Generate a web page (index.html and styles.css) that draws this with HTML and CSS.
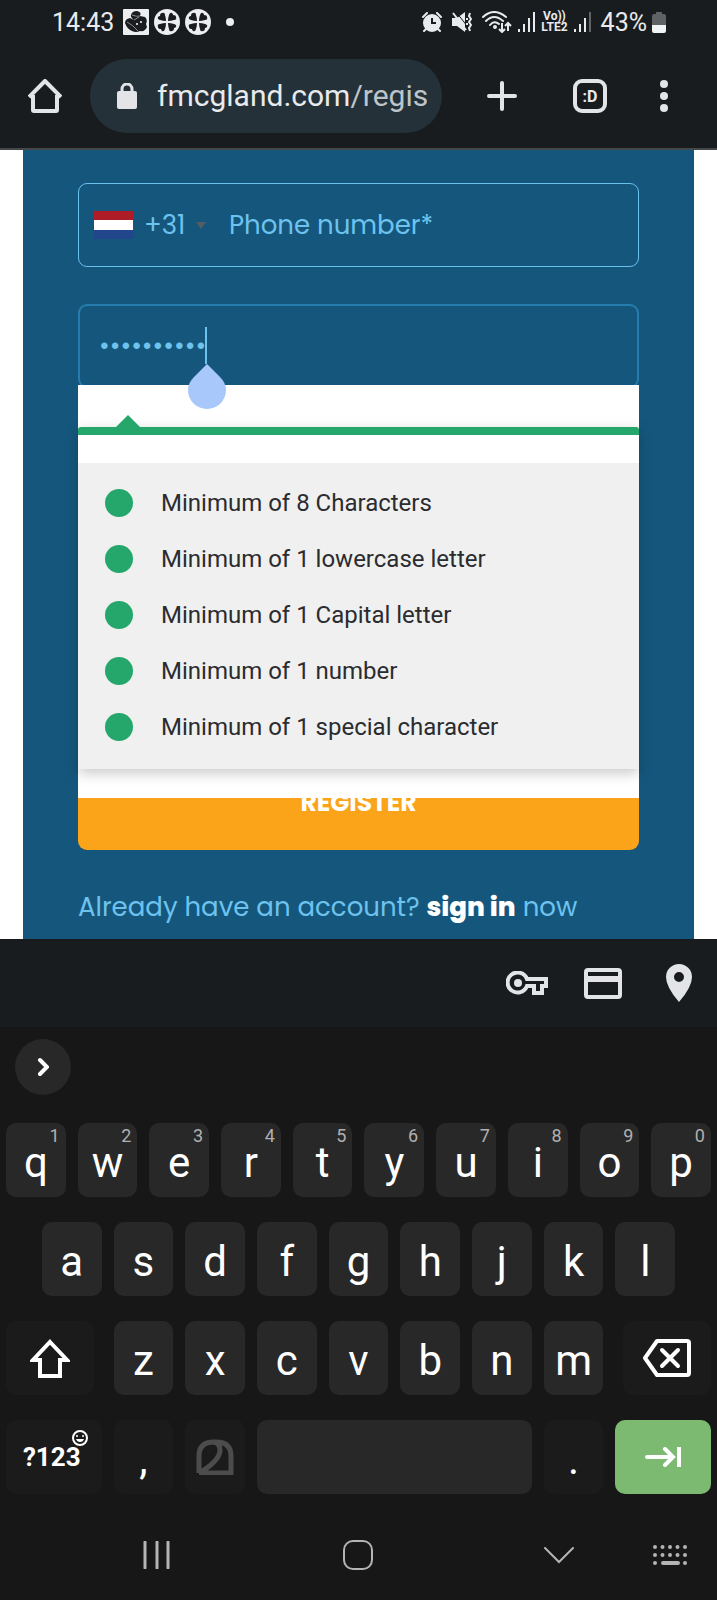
FILE: index.html
```html
<!DOCTYPE html>
<html lang="en">
<head>
<meta charset="utf-8">
<meta name="viewport" content="width=device-width, initial-scale=1">
<title>Register</title>
<link rel="stylesheet" href="styles.css">
</head>
<body>
<header class="chrome">
  <div class="status">
    <span class="status-time">14:43</span>
    <svg width="26" height="26" viewBox="0 0 26 26"><rect width="26" height="26" rx="1" fill="#eceef0"/><path d="M8 6Q9 2 14 2Q19 3 17 7L22 8Q25 11 23 15L24 18Q22 23 17 22Q13 24 9 22Q4 20 2 14Q2 10 7 9L11 11Q7 8 8 6z" fill="#1a1c1f"/><path d="M9 6q5 2 8 1M11 11l5-3M4 13q6 3 11 9" stroke="#8a8d90" stroke-width="1" fill="none"/><circle cx="18" cy="13" r="1" fill="#fff"/><circle cx="14" cy="15" r="1" fill="#fff"/></svg>
    <svg width="26" height="26" viewBox="0 0 26 26"><circle cx="13" cy="13" r="13" fill="#eceef0"/><g fill="#1a1c1f"><path id="petal" d="M12 12Q9 12 6 11Q3 10 4 8Q5 7 6 7Q6 4 8 4Q11 3 11 6Q12 9 12 12z"/><use href="#petal" transform="rotate(90 13 13)"/><use href="#petal" transform="rotate(180 13 13)"/><use href="#petal" transform="rotate(270 13 13)"/></g></svg>
    <svg width="26" height="26" viewBox="0 0 26 26"><circle cx="13" cy="13" r="13" fill="#eceef0"/><g fill="#1a1c1f"><use href="#petal"/><use href="#petal" transform="rotate(90 13 13)"/><use href="#petal" transform="rotate(180 13 13)"/><use href="#petal" transform="rotate(270 13 13)"/></g></svg>
    <span class="status-dot"></span>
    <span class="status-right">
      <svg width="20" height="20" viewBox="0 0 20 20"><circle cx="10" cy="11" r="9" fill="#e8eaed"/><path d="M1 5l4-4M19 5l-4-4M4 17l-2 2M16 17l2 2" stroke="#e8eaed" stroke-width="2" stroke-linecap="round"/><path d="M10 6v5h4" stroke="#1a1c1f" stroke-width="2" fill="none"/></svg>
      <svg width="20" height="20" viewBox="0 0 20 20"><path d="M0 6h5l8-6v20l-8-6H0z" fill="#e8eaed"/><path d="M4 0l12 15" stroke="#191c1e" stroke-width="1"/><path d="M1 1l13 17" stroke="#e8eaed" stroke-width="2"/><path d="M15 6v2M15 11v2M18 1l-1 3 2 3-2 3 2 3-2 3 1 3" stroke="#e8eaed" stroke-width="2" fill="none"/></svg>
      <svg width="30" height="22" viewBox="0 0 30 22"><path d="M1 6Q12-4 24 6M4 10Q12 2 21 10M8 14Q12 9 17 13" stroke="#e8eaed" stroke-width="2" fill="none" stroke-linecap="round"/><circle cx="13" cy="16" r="2" fill="#e8eaed"/><path d="M20 12v8M17 18l3 3 3-3M26 20v-7M23 15l3-3 3 3" stroke="#e8eaed" stroke-width="2" fill="none"/></svg>
      <svg width="19" height="20" viewBox="0 0 19 20"><path d="M2 20v-3M7 20v-8M12 20V6M17 20V0" stroke="#e8eaed" stroke-width="2"/></svg>
      <span class="volte"><span>Vo))</span><span>LTE2</span></span>
      <svg width="19" height="20" viewBox="0 0 19 20"><path d="M2 20v-3M7 20v-8M12 20V6" stroke="#e8eaed" stroke-width="2"/><path d="M17 20V0" stroke="#616467" stroke-width="2"/></svg>
      <span class="battery-text">43%</span>
      <svg width="14" height="21" viewBox="0 0 14 21"><path d="M4 0h6v2h2q2 0 2 2v9H0V4q0-2 2-2h2z" fill="#5f6164"/><path d="M0 13h14v6q0 2-2 2H2q-2 0-2-2z" fill="#f1f3f4"/></svg>
    </span>
  </div>
  <nav class="toolbar">
    <button class="tool home" aria-label="Home"><svg width="34" height="34" viewBox="0 0 34 34"><path d="M5 16v15q0 1 1 1h22q1 0 1-1V16M1 18L17 2l16 16" fill="none" stroke="#e3e4e8" stroke-width="4" stroke-linejoin="round"/></svg></button>
    <div class="pill">
      <svg width="20" height="26" viewBox="0 0 20 26"><path d="M5 10V6a5 5 0 0 1 10 0v4" fill="none" stroke="#e3e4e8" stroke-width="3"/><rect y="8" width="20" height="18" rx="2" fill="#e3e4e8"/></svg>
      <span class="url">fmcgland.com<span class="url-path">/regis</span></span>
    </div>
    <button class="tool wide" aria-label="New tab"><svg width="30" height="30" viewBox="0 0 30 30"><path d="M15 2v26M2 15h26" stroke="#e3e4e8" stroke-width="4" stroke-linecap="round"/></svg></button>
    <button class="tool wide" aria-label="Tabs"><span class="tabs">:D</span></button>
    <button class="tool menu" aria-label="Menu"><svg width="8" height="32" viewBox="0 0 8 32"><g fill="#e3e4e8"><circle cx="4" cy="4" r="4"/><circle cx="4" cy="16" r="4"/><circle cx="4" cy="28" r="4"/></g></svg></button>
  </nav>
</header>

<main class="page">
  <form class="form">
    <div class="field phone">
      <svg class="flag" width="39" height="28" viewBox="0 0 39 28"><rect width="39" height="28" fill="#fff"/><rect width="39" height="9" fill="#ae1c28"/><rect y="19" width="39" height="9" fill="#21468b"/></svg>
      <span class="code">+31</span>
      <span class="arrow"></span>
      <input class="phone-input" type="tel" placeholder="Phone number*" aria-label="Phone number">
    </div>
    <div class="password">
      <input class="field password-input" type="password" value="Abcdef123!" aria-label="Password">
      <span class="caret"></span>
      <svg class="handle" width="38" height="45" viewBox="0 0 38 45"><path d="M19 0L32 13Q38 19 38 26A19 19 0 0 1 0 26Q0 19 6 13z" fill="#a8c7fa"/></svg>
      <div class="popup">
        <div class="card">
          <ul class="rules">
            <li>Minimum of 8 Characters</li>
            <li>Minimum of 1 lowercase letter</li>
            <li>Minimum of 1 Capital letter</li>
            <li>Minimum of 1 number</li>
            <li>Minimum of 1 special character</li>
          </ul>
        </div>
      </div>
    </div>
    <button class="register" type="button">REGISTER</button>
    <p class="signin">Already have an account? <a href="#">sign in</a> now</p>
  </form>
</main>

<div class="autofill">
  <button class="fill" aria-label="Passwords"><svg width="42" height="24" viewBox="0 0 42 24"><path d="M21 8h19v7h-4v7h-8v-7h-7A10 10 0 1 1 21 8z" fill="none" stroke="#e3e4e8" stroke-width="4"/><circle cx="12" cy="12" r="4" fill="#e3e4e8"/></svg></button>
  <button class="fill" aria-label="Payment cards"><svg width="38" height="31" viewBox="0 0 38 31"><rect x="2" y="2" width="34" height="27" rx="2" fill="none" stroke="#e3e4e8" stroke-width="4"/><path d="M2 11h34" stroke="#e3e4e8" stroke-width="6"/></svg></button>
  <button class="fill" aria-label="Addresses"><svg width="26" height="38" viewBox="0 0 26 38"><path fill-rule="evenodd" d="M13 0a13 13 0 0 1 13 13Q26 23 13 38Q0 23 0 13A13 13 0 0 1 13 0zm0 8a5 5 0 1 0 0 10a5 5 0 0 0 0-10z" fill="#e3e4e8"/></svg></button>
</div>

<section class="keyboard" aria-label="Keyboard">
  <div class="suggest"><button class="expand" aria-label="Expand"><svg width="12" height="20" viewBox="0 0 12 20"><path d="M3 3l7 7-7 7" fill="none" stroke="#fff" stroke-width="4" stroke-linecap="round"/></svg></button></div>
  <div class="row">
    <button class="key">q<small>1</small></button><button class="key">w<small>2</small></button><button class="key">e<small>3</small></button><button class="key">r<small>4</small></button><button class="key">t<small>5</small></button><button class="key">y<small>6</small></button><button class="key">u<small>7</small></button><button class="key">i<small>8</small></button><button class="key">o<small>9</small></button><button class="key">p<small>0</small></button>
  </div>
  <div class="row">
    <button class="key second">a</button><button class="key">s</button><button class="key">d</button><button class="key">f</button><button class="key">g</button><button class="key">h</button><button class="key">j</button><button class="key">k</button><button class="key">l</button>
  </div>
  <div class="row">
    <button class="key icon-key dim large shift" aria-label="Shift"><svg width="40" height="39" viewBox="0 0 40 39"><path d="M20 3L37 21H30V37H10V21H3z" fill="none" stroke="#fff" stroke-width="4"/></svg></button><button class="key">z</button><button class="key">x</button><button class="key">c</button><button class="key">v</button><button class="key">b</button><button class="key">n</button><button class="key">m</button><button class="key icon-key dim large back" aria-label="Backspace"><svg width="48" height="38" viewBox="0 0 48 38"><path d="M14 2H44q2 0 2 2V34q0 2-2 2H14L2 19z" fill="none" stroke="#fff" stroke-width="4" stroke-linejoin="round"/><path d="M19 11l16 16M35 11L19 27" stroke="#fff" stroke-width="4" stroke-linecap="round"/></svg></button>
  </div>
  <div class="row">
    <button class="key dim large symbols">?123<svg class="smile" width="16" height="16" viewBox="0 0 16 16"><circle cx="8" cy="8" r="7" fill="none" stroke="#fff" stroke-width="2"/><circle cx="5" cy="6" r="1" fill="#fff"/><circle cx="11" cy="6" r="1" fill="#fff"/><path d="M4 9h8q-1 3-4 3T4 9z" fill="#fff"/></svg></button><button class="key dim">,</button><button class="key icon-key dim" aria-label="Change language"><svg width="38" height="36" viewBox="0 0 38 36"><path d="M3 34V17Q3 3 18 3H20Q35 3 35 17V34H3M5 33Q24 21 24 11Q24 4 17 3" fill="none" stroke="#4c4c4c" stroke-width="5"/></svg></button><button class="key space" aria-label="Space"></button><button class="key dim">.</button><button class="key icon-key large next" aria-label="Next field"><svg width="36" height="20" viewBox="0 0 36 20"><path d="M2 10h26M20 2l8 8-8 8" fill="none" stroke="#fff" stroke-width="4" stroke-linecap="round"/><path d="M34 0v20" stroke="#fff" stroke-width="4"/></svg></button>
  </div>
</section>

<nav class="sysnav">
  <button class="sys" aria-label="Recent apps"><svg width="28" height="28" viewBox="0 0 28 28"><path d="M2 1v26M14 1v26M25 1v26" stroke="#b4b4b4" stroke-width="3" stroke-linecap="round"/></svg></button>
  <button class="sys" aria-label="Home screen"><svg width="30" height="30" viewBox="0 0 30 30"><rect x="1" y="1" width="28" height="28" rx="9" fill="none" stroke="#b4b4b4" stroke-width="2"/></svg></button>
  <button class="sys" aria-label="Hide keyboard"><svg width="30" height="17" viewBox="0 0 30 17"><path d="M1 1l14 14L29 1" fill="none" stroke="#b4b4b4" stroke-width="2" stroke-linecap="round"/></svg></button>
  <button class="sys" aria-label="Switch keyboard"><svg width="35" height="20" viewBox="0 0 35 20"><path d="M2 2h32M2 10h32" stroke="#b4b4b4" stroke-width="4" stroke-linecap="round" stroke-dasharray="0 7.5"/><path d="M2 18h0M10 18h15M32 18h0" stroke="#b4b4b4" stroke-width="4" stroke-linecap="round"/></svg></button>
</nav>
</body>
</html>
```
FILE: styles.css
```css
* { box-sizing: border-box; }
body { margin: 0; background: #171717; font-family: Roboto, "Liberation Sans", sans-serif; }
button { border: 0; padding: 0; background: none; color: inherit; font: inherit; }
svg { display: block; flex: none; }

.chrome { background: #191c1e; border-bottom: 2px solid #45484a; color: #e8eaed; }
.status { display: flex; align-items: center; height: 44px; padding: 0 51px 0 52px; font-size: 25px; gap: 5px; }
.status-time { margin-right: 4px; }
.status-dot { width: 8px; height: 8px; margin-left: 10px; border-radius: 50%; background: #eceef0; }
.status-right { display: flex; align-items: center; gap: 5px; margin-left: auto; }
.status-right svg:nth-child(-n+2) { margin-right: 5px; }
.volte { display: flex; flex-direction: column; align-items: center; font-size: 12px; line-height: 11px; font-weight: 700; }
.battery-text { margin-left: 4px; }

.toolbar { display: flex; align-items: center; height: 104px; padding: 0 23px 0 0; }
.tool { display: grid; place-items: center; height: 74px; }
.home { width: 90px; }
.wide { width: 88px; }
.menu { width: 60px; }
.pill { display: flex; flex: 1; align-items: center; gap: 20px; min-width: 0; height: 74px; margin-right: 16px; padding: 0 15px 0 27px; border-radius: 37px; background: #243139; }
.url { overflow: hidden; font-size: 30px; line-height: 40px; white-space: nowrap; }
.url-path { color: #bdc5cb; }
.tabs { display: grid; place-items: center; width: 34px; height: 34px; border: 4px solid #e3e4e8; border-radius: 9px; font-size: 16px; font-weight: 700; }

.page { padding: 0 23px; background: #fff; }
.form { padding: 33px 55px 12px; background: #15577c; color: #6dc3ee; font-family: Poppins, Inter, sans-serif; font-size: 26px; }
.field { width: 100%; height: 84px; border: 1px solid #6ac0ec; border-radius: 9px; background: none; color: inherit; font: inherit; }
.phone { display: flex; align-items: center; padding: 0 15px; }
.flag { margin-right: 11px; }
.code { width: 40px; }
.arrow { margin: 0 21px 0 12px; border: 5px solid transparent; border-top: 7px solid #555c63; border-bottom: 0; }
.phone-input { flex: 1; min-width: 0; border: 0; background: none; color: inherit; font: inherit; }
.phone-input::placeholder { color: #6dc3ee; opacity: 1; }

.password { position: relative; margin-top: 37px; }
.password-input { display: block; padding: 0 19px; border: 2px solid #267cad; outline: 0; }
.caret { position: absolute; top: 23px; left: 127px; width: 2px; height: 37px; background: #6dc3ee; }
.handle { position: absolute; z-index: 3; top: 60px; left: 110px; }
.popup { position: absolute; z-index: 2; top: 81px; left: 0; right: 0; padding: 42px 0 29px; background: #fff; font-family: Roboto, sans-serif; }
.card { position: relative; padding-top: 28px; border-top: 8px solid #25a76c; border-radius: 3px 3px 0 0; background: #fff; box-shadow: 0 4px 14px rgba(0, 0, 0, .22); }
.card::before { content: ""; position: absolute; top: -20px; left: 38px; border: 12px solid transparent; border-top: 0; border-bottom-color: #25a76c; }
.rules { margin: 0; padding: 12px 27px 14px; background: #f0f0f0; color: #2b2c2f; font-size: 24px; line-height: 56px; list-style: none; }
.rules li { display: flex; align-items: center; gap: 28px; }
.rules li::before { content: ""; width: 28px; height: 28px; border-radius: 50%; background: #25a76c; }

.register { display: block; width: 100%; height: 94px; margin-top: 368px; border-radius: 9px; background: #fba41a; color: #fff; font-weight: 700; font-size: 25px; }
.signin { margin: 37px 0 0; line-height: 40px; white-space: nowrap; }
.signin a { color: #fff; font-weight: 800; text-decoration: none; }

.autofill { display: flex; align-items: center; justify-content: flex-end; height: 88px; padding: 0 0 0 20px; background: #191c1e; }
.fill { display: grid; place-items: center; width: 76px; height: 60px; }

.keyboard { color: #fff; font-size: 42px; }
.suggest { height: 96px; padding: 12px 15px; }
.expand { display: grid; place-items: center; width: 56px; height: 56px; border-radius: 50%; background: #282828; }
.row { display: grid; grid-template-columns: repeat(20, 1fr); margin-bottom: 25px; }
.key { position: relative; display: grid; grid-column: span 2; place-items: center; min-width: 0; height: 74px; margin: 0 6px; padding-top: 5px; border-radius: 10px; background: #282828; line-height: 70px; }
.key small { position: absolute; top: 3px; right: 6px; color: #b0b0b0; font-size: 18px; line-height: 20px; }
.icon-key { padding-top: 0; }
.second { grid-column: 2 / span 2; }
.large { grid-column: span 3; }
.dim { background: #1b1b1b; }
.shift { margin-right: 14px; }
.back { margin-left: 14px; }
.space { grid-column: span 8; }
.symbols { padding: 0 4px 0 0; font-size: 26px; font-weight: 700; }
.smile { position: absolute; top: 10px; right: 14px; }
.next { background: #7cba72; }

.sysnav { display: grid; grid-template-columns: 199fr 201fr 109fr 64fr; align-items: center; height: 72px; padding-left: 20%; }
.sys { display: flex; align-items: center; height: 40px; }
```
